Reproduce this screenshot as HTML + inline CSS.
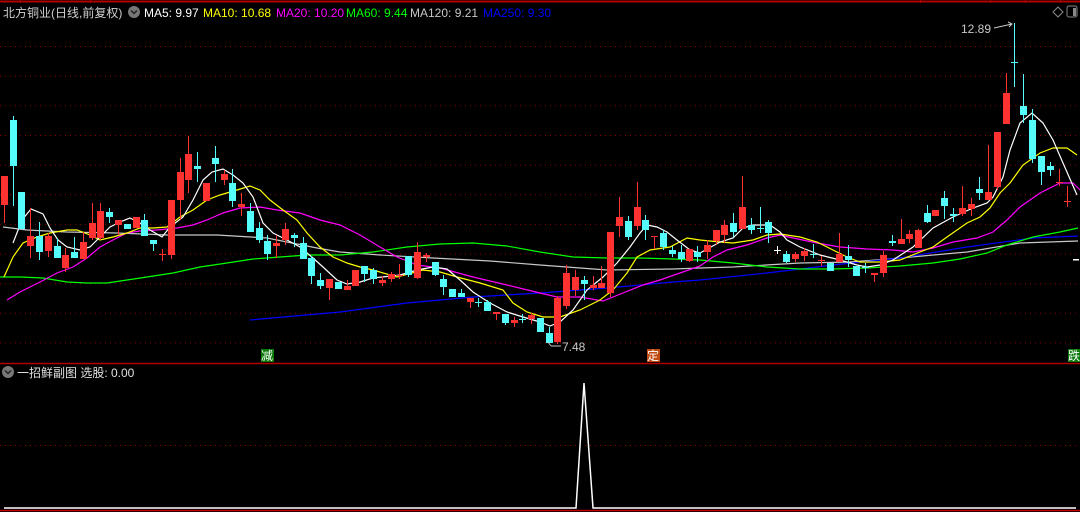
<!DOCTYPE html>
<html><head><meta charset="utf-8"><style>
html,body{margin:0;padding:0;background:#000;width:1080px;height:512px;overflow:hidden}
svg{display:block}
text{font-family:"Liberation Sans","Noto Sans CJK SC",sans-serif;font-size:12px}
</style></head><body>
<svg id="s" width="1080" height="512" xmlns="http://www.w3.org/2000/svg">
<rect width="1080" height="512" fill="#000"/>
<g id="grid" stroke="#8a0000" stroke-width="1" stroke-dasharray="1,4"></g>
<line x1="0" y1="1.5" x2="1080" y2="1.5" stroke="#b00000" stroke-width="2"/>
<g stroke="#b00000" stroke-width="1"><line x1="20.5" y1="0" x2="20.5" y2="3"/><line x1="90.5" y1="0" x2="90.5" y2="3"/><line x1="920.5" y1="0" x2="920.5" y2="3"/><line x1="990.5" y1="0" x2="990.5" y2="3"/><line x1="1025.5" y1="0" x2="1025.5" y2="3"/><line x1="1060.5" y1="0" x2="1060.5" y2="3"/></g>
<line x1="0" y1="363.5" x2="1080" y2="363.5" stroke="#b00000" stroke-width="1.5"/>
<line x1="0" y1="445.5" x2="1080" y2="445.5" stroke="#8a0000" stroke-dasharray="1,4"/>
<g id="ma" fill="none" stroke-width="1.2"></g>
<g id="cd"></g>
<text x="3" y="17" fill="#d0d0d0">北方铜业(日线,前复权)</text>
<circle cx="134" cy="12" r="6" fill="#777"/><path d="M131 10.5l3 3 3-3" stroke="#222" stroke-width="1.5" fill="none"/>
<text x="144" y="17" fill="#fff">MA5: 9.97</text>
<text x="203" y="17" fill="#ffff00">MA10: 10.68</text>
<text x="276" y="17" fill="#ff00ff">MA20: 10.20</text>
<text x="346" y="17" fill="#00ff00">MA60: 9.44</text>
<text x="410" y="17" fill="#c8c8c8">MA120: 9.21</text>
<text x="483" y="17" fill="#0000ff">MA250: 9.30</text>
<path d="M1053 12l5-5 5 5-5 5z" fill="none" stroke="#888"/>
<rect x="1067" y="6" width="10" height="11" rx="2" fill="none" stroke="#888"/><rect x="1073" y="8" width="3" height="8" fill="#888"/>
<text x="961" y="33" fill="#c8c8c8">12.89</text>
<path d="M994 28l18-4M1008 22l4 2-3 3" stroke="#c8c8c8" fill="none"/>
<text x="562" y="351" fill="#c8c8c8">7.48</text>
<path d="M561 346h-10M551 346l-3-4" stroke="#c8c8c8" fill="none"/>
<rect x="261" y="349" width="13" height="13" fill="#0a7a0a"/><text x="261" y="360" fill="#fff" style="font-size:12px">减</text>
<rect x="647" y="349" width="13" height="13" fill="#c04a10"/><text x="647" y="360" fill="#fff" style="font-size:12px">定</text>
<rect x="1068" y="349" width="12" height="13" fill="#0a7a0a"/><text x="1068" y="360" fill="#fff" style="font-size:12px">跌</text>
<rect x="1073" y="259" width="6" height="1.5" fill="#fff"/>
<circle cx="8" cy="372" r="6" fill="#777"/><path d="M5 370.5l3 3 3-3" stroke="#222" stroke-width="1.5" fill="none"/>
<text x="17" y="377" fill="#e0e0e0">一招鲜副图  选股: 0.00</text>
<polyline points="4,508 576,508 584,383 593,508 1076,508" fill="none" stroke="#fff" stroke-width="1.5"/>
<line x1="0" y1="510.5" x2="1080" y2="510.5" stroke="#c00000" stroke-width="1.5"/>
</svg>
<script>
var NS="http://www.w3.org/2000/svg";
function el(p,t,a){var e=document.createElementNS(NS,t);for(var k in a)e.setAttribute(k,a[k]);p.appendChild(e);return e;}
var g=document.getElementById('grid');
for(var y=46.5;y<350;y+=29.65){el(g,'line',{x1:0,y1:y.toFixed(1),x2:1080,y2:y.toFixed(1)});}
var ma=document.getElementById('ma');
var L={
"#c8c8c8":"3,227 27,230 67,232 117,233 167,235 217,235 267,238 317,248 340,252 380,255 433,258 490,261 540,265 607,270 673,269 700,268 733,267 800,263 850,262 900,258 967,252 1020,243 1078,241",
"#0000ff":"250,320 340,312 407,303 473,297 540,293 607,288 673,282 700,280 767,273 833,265 900,258 967,247 1033,238 1078,236",
"#00ff00":"0,277 20,277 43,278 67,282 87,283 107,283 127,280 147,277 173,273 200,267 227,263 253,259 280,257 307,255 340,255 373,252 407,247 440,244 473,243 507,246 540,252 573,257 607,258 640,258 673,259 700,260 733,263 767,267 800,269 833,269 867,268 900,266 933,263 960,259 987,253 1007,245 1033,237 1060,232 1078,228",
"#ff00ff":"7,300 20,292 40,282 57,273 73,267 87,258 100,247 113,240 127,233 140,231 157,230 177,228 193,225 207,220 223,213 240,208 260,207 277,210 300,213 320,220 340,225 360,235 380,247 397,257 417,265 440,268 473,277 507,285 540,293 557,297 580,297 603,301 623,293 643,285 660,280 680,273 700,266 713,257 727,250 747,245 767,238 780,235 793,238 817,243 840,247 867,249 893,250 913,252 933,248 953,242 977,238 993,232 1007,220 1020,207 1040,193 1060,183 1073,183 1080,190",
"#ffff00":"4,277 13,257 23,243 37,237 50,233 67,230 77,230 90,235 100,240 113,237 127,233 140,228 153,228 167,227 180,217 193,210 207,200 220,195 237,190 250,186 260,190 270,200 283,210 297,220 307,233 320,247 333,257 347,263 360,267 373,270 397,277 423,270 440,272 457,277 480,283 503,290 513,303 527,312 543,317 560,317 580,310 600,300 613,290 627,273 637,257 650,250 670,247 687,238 700,240 720,242 733,243 753,240 767,235 780,234 800,237 817,242 833,250 847,257 860,262 880,262 900,260 920,252 933,247 947,237 967,223 980,217 990,208 1000,193 1010,183 1023,165 1040,153 1053,148 1067,148 1077,155",
"#ffffff":"13,243 22,220 31,209 43,214 50,228 58,240 67,247 80,250 90,247 100,237 110,227 120,222 130,218 140,223 150,230 162,237 170,227 183,217 193,200 203,180 212,172 223,169 233,175 243,183 253,197 263,223 273,233 287,240 300,247 313,258 323,267 337,280 347,284 360,282 373,278 400,275 417,270 433,267 447,269 460,280 473,292 490,303 507,312 523,317 540,322 550,326 560,322 573,310 587,290 603,277 617,263 630,247 640,233 647,225 657,227 667,232 677,240 690,250 700,253 720,242 733,238 743,228 753,225 770,225 780,232 787,240 800,247 820,255 840,260 857,265 867,267 880,265 893,260 913,247 933,228 953,217 973,208 987,203 993,197 1003,177 1010,150 1020,123 1032,113 1043,123 1053,140 1063,163 1077,195"
};
for(var c in L)el(ma,'polyline',{points:L[c],stroke:c});
var R="#ff3232",C="#54fcfc";
// x, open/top, close/bottom, high, low, color
var D=[
[4,176,205,176,223,R],[13,120,166,116,206,C],[21,192,229,192,229,C],[30,236,246,208,258,R],[39,236,252,222,260,C],[48,236,251,233,257,R],[57,246,258,238,258,C],[65,255,268,248,272,R],[74,252,258,237,258,C],[83,242,259,232,259,R],[92,223,238,203,240,R],[100,211,238,203,240,R],[109,212,217,208,223,C],[118,220,225,220,235,R],[127,224,229,224,229,C],[136,217,228,217,228,R],[144,220,236,214,236,C],[153,240,244,240,251,C],[162,254,255,249,261,R],[171,200,255,200,259,R],[180,172,200,158,220,R],[188,154,180,136,193,R],[197,166,169,152,182,C],[206,183,201,183,201,R],[215,158,164,146,182,C],[224,174,180,170,185,R],[232,183,201,169,207,C],[241,204,207,193,216,R],[250,211,232,203,232,C],[259,228,240,222,243,C],[267,241,254,235,260,C],[276,243,246,235,258,R],[285,229,240,223,245,R],[294,235,238,233,247,C],[303,243,259,237,259,C],[311,258,276,256,284,C],[320,280,286,273,289,C],[329,279,288,279,300,R],[338,282,289,282,289,C],[347,286,290,280,290,R],[355,270,286,270,286,R],[364,266,274,266,282,C],[373,270,279,268,284,C],[382,280,283,276,286,R],[391,274,279,272,282,R],[399,275,276,264,279,R],[408,256,275,256,277,C],[417,252,278,242,279,R],[426,255,257,253,262,R],[435,262,275,262,276,C],[443,279,287,275,295,C],[452,289,297,289,297,C],[461,293,297,289,297,C],[470,298,302,298,308,R],[478,302,303,298,307,C],[487,302,311,300,311,C],[496,312,314,312,320,R],[505,314,323,314,325,C],[514,320,323,317,327,R],[522,319,320,314,323,C],[531,315,319,313,324,R],[540,318,332,318,332,C],[549,333,343,327,343,C],[557,298,342,296,344,R],[566,273,306,265,309,R],[575,277,290,270,296,R],[584,280,284,276,300,C],[593,285,288,276,290,R],[601,283,288,266,288,R],[610,232,293,232,297,R],[619,217,226,197,237,R],[628,221,237,216,240,C],[637,207,226,182,230,R],[645,220,230,215,240,C],[654,236,237,236,249,R],[663,233,247,230,250,C],[672,250,254,246,257,C],[681,252,259,245,262,C],[689,249,261,249,262,R],[697,252,257,246,262,C],[707,245,252,240,259,R],[716,230,241,230,245,R],[724,225,235,220,243,R],[733,223,232,213,237,C],[742,207,229,176,229,R],[751,225,230,218,234,C],[760,228,229,207,233,C],[768,222,233,220,243,C],[777,250,251,246,254,"#ffffff"],[786,254,262,251,263,C],[795,254,259,252,262,R],[804,251,256,248,261,R],[813,254,255,244,258,C],[821,260,261,256,266,R],[830,263,271,263,271,C],[839,254,262,233,262,R],[848,256,260,245,267,C],[856,266,276,266,276,C],[865,267,268,263,273,C],[874,273,275,273,282,R],[883,255,273,251,277,R],[892,241,243,235,246,C],[901,239,244,219,244,R],[909,234,239,230,243,R],[918,230,248,229,248,R],[927,213,222,205,223,C],[935,210,216,210,216,R],[944,198,206,191,219,C],[953,214,216,208,222,C],[962,208,214,186,216,R],[971,204,209,198,216,R],[979,189,193,177,200,C],[988,192,200,145,200,R],[997,132,187,132,190,R],[1006,93,124,73,124,R],[1014,62,63,23,87,C],[1023,106,115,74,123,C],[1032,120,159,109,163,C],[1041,156,172,156,185,C],[1050,166,170,162,176,C],[1059,182,183,169,186,R],[1067,201,202,186,207,R]
];
var cd=document.getElementById('cd');
D.forEach(function(d){
 var x=d[0],t=d[1],b=d[2],h=d[3],l=d[4],col=d[5];
 el(cd,'line',{x1:x+0.5,y1:h,x2:x+0.5,y2:l,stroke:col,'stroke-width':1});
 var bh=Math.max(b-t,1);
 el(cd,'rect',{x:x-3,y:t,width:7,height:bh,fill:col});
});
</script>
</body></html>
